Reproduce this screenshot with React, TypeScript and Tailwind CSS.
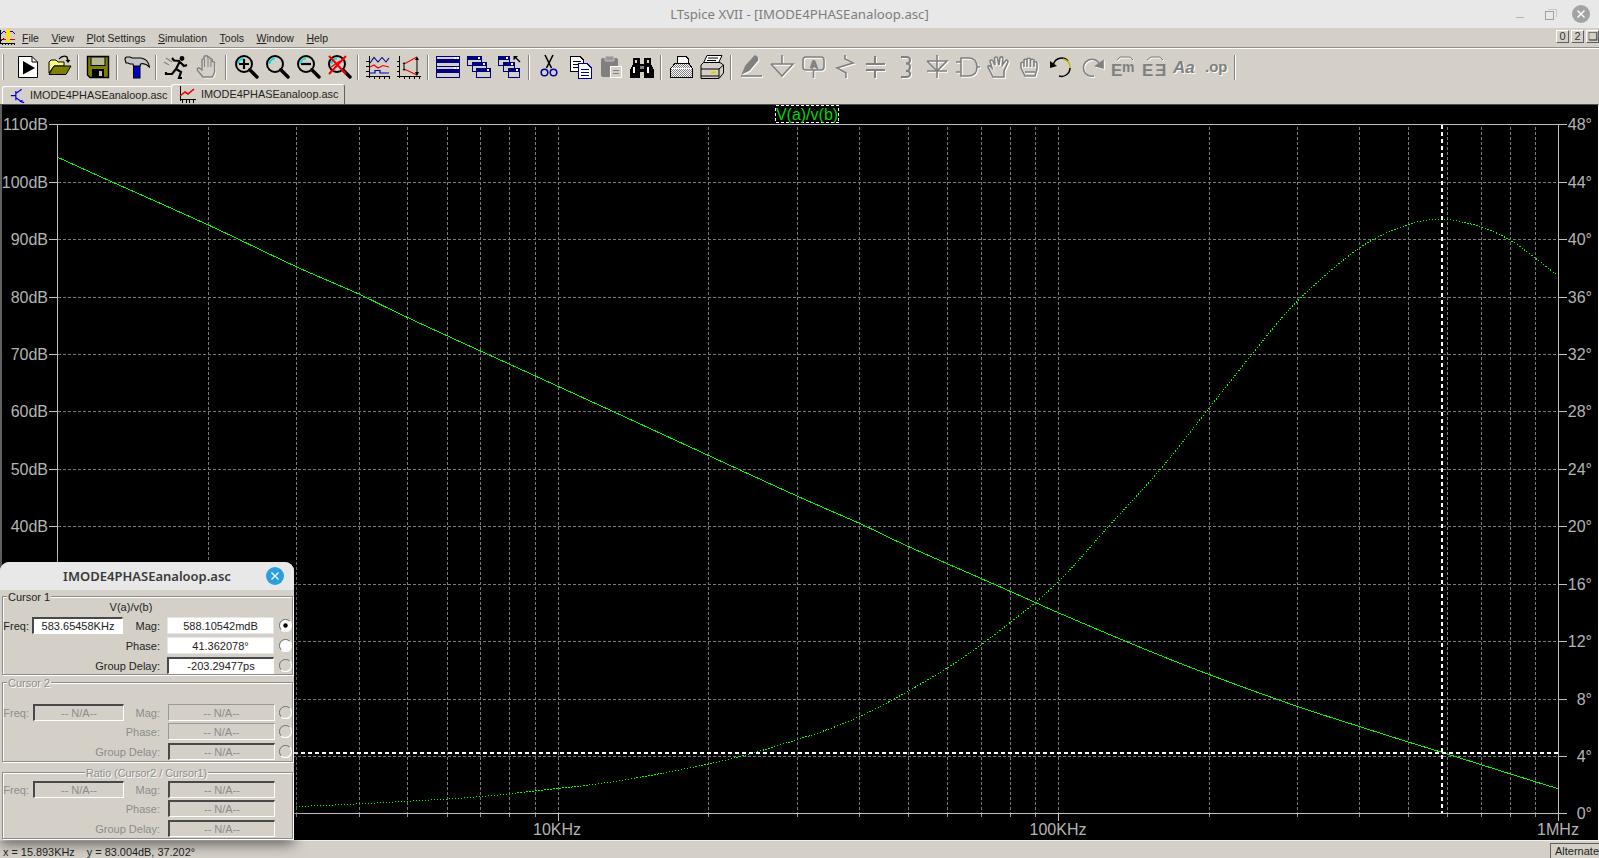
import React from "react";

const FONT = "[font-family:'Liberation_Sans',Arial,sans-serif]";

const MAG: [number, number][] = [[57.7,157.3],[110,181],[208.3,225],[296.3,266.7],[358.7,294],[420,323.3],[600,405.5],[780,488.3],[859.3,523.3],[907.3,546],[980.7,578.3],[1035,602.3],[1058.3,612.7],[1126.7,641.7],[1180,663.3],[1240,686],[1300,707.3],[1360,726.7],[1407.3,741.7],[1441.7,752.3],[1480,764.3],[1510.7,774],[1535.3,781.7],[1558.3,788.7]];
const PHASE: [number, number][] = [[296,806.7],[358.3,803.8],[407.3,801.3],[480,796.7],[535,790.9],[613.3,781.7],[708.3,764],[780,745],[859.3,716.7],[946.7,668.3],[1009.3,623.3],[1058.3,581.7],[1108.3,526.7],[1161.2,468.3],[1207.6,410],[1252.8,353.3],[1296.7,301.7],[1359,248.3],[1407.2,225],[1442.1,219.3],[1480.3,226.7],[1509.9,240],[1535.5,258.3],[1557,275]];
const pts = (a: [number, number][]) => a.map((p) => p.join(",")).join(" ");

function spline(a: [number, number][]): [number, number][] {
  const out: [number, number][] = [];
  for (let i = 0; i < a.length - 1; i++) {
    const p0 = a[Math.max(0, i - 1)], p1 = a[i], p2 = a[i + 1], p3 = a[Math.min(a.length - 1, i + 2)];
    for (let k = 0; k < 8; k++) {
      const t = k / 8, t2 = t * t, t3 = t2 * t;
      const f = (q: 0 | 1) => 0.5 * (2 * p1[q] + (p2[q] - p0[q]) * t + (2 * p0[q] - 5 * p1[q] + 4 * p2[q] - p3[q]) * t2 + (3 * p1[q] - p0[q] - 3 * p2[q] + p3[q]) * t3);
      out.push([+f(0).toFixed(2), +f(1).toFixed(2)]);
    }
  }
  out.push(a[a.length - 1]);
  return out;
}

function Plot() {
  const L = 58, R = 1558, T = 124, B = 813;
  const xs: { x: number; major: boolean }[] = [];
  for (let d = 0; d < 3; d++) for (let m = 1; m < 10; m++) {
    if (d === 0 && m === 1) continue;
    xs.push({ x: Math.round(57.7 + 500.2 * (d + Math.log10(m))), major: m === 1 });
  }
  const ys = Array.from({ length: 11 }, (_, i) => Math.round(124.3 + 57.42 * (i + 1)));
  const left = Array.from({ length: 13 }, (_, i) => `${110 - 10 * i}dB`);
  const right = Array.from({ length: 13 }, (_, i) => `${48 - 4 * i}°`);
  const tc = "#b4b4b4";
  return (
    <svg className="block w-full h-full" viewBox="2 105 1596 735" shapeRendering="crispEdges">
      <g stroke="#787878" strokeDasharray="3 2">
        {xs.map((v) => <line key={v.x} x1={v.x + 0.5} x2={v.x + 0.5} y1={T + 3} y2={B} />)}
        {ys.map((y) => <line key={y} x1={L} x2={R} y1={y + 0.5} y2={y + 0.5} />)}
      </g>
      <g stroke="#909090">
        {xs.map((v) => <line key={v.x} x1={v.x + 0.5} x2={v.x + 0.5} y1={B} y2={B + 4} />)}
      </g>
      <g stroke="#c0c0c0">
        <line x1={L - 9} x2={R + 9} y1={T + 0.5} y2={T + 0.5} />
        <line x1={L - 9} x2={R + 9} y1={B + 0.5} y2={B + 0.5} />
        <line x1={L - 0.5} x2={L - 0.5} y1={T} y2={B + 8} />
        <line x1={R + 0.5} x2={R + 0.5} y1={T} y2={B + 8} />
        {ys.map((y) => <g key={y}><line x1={L - 9} x2={L} y1={y + 0.5} y2={y + 0.5} /><line x1={R} x2={R + 9} y1={y + 0.5} y2={y + 0.5} /></g>)}
        {xs.filter((v) => v.major).map((v) => <line key={v.x} x1={v.x + 0.5} x2={v.x + 0.5} y1={B} y2={B + 8} />)}
      </g>
      <polyline points={pts(spline(PHASE))} fill="none" stroke="#00ff00" strokeDasharray="1.4 1.6" />
      <polyline points={pts(spline(MAG))} fill="none" stroke="#00f000" />
      <line x1={294} x2={R} y1={753} y2={753} stroke="#fff" strokeWidth={2} strokeDasharray="4 3" />
      <line x1={1442} x2={1442} y1={125} y2={B} stroke="#fff" strokeWidth={2} strokeDasharray="4 3" />
      <rect x={775.5} y={105.5} width={63} height={17} fill="none" stroke="#fff" strokeDasharray="3 2" />
      <g shapeRendering="auto" fontSize={16} className={FONT}>
        <text x={807} y={119.5} textAnchor="middle" fill="#00d800">V(a)/v(b)</text>
        {left.map((s, i) => <text key={s} x={48} y={124.3 + 57.42 * i + 6} textAnchor="end" fill={tc}>{s}</text>)}
        {right.map((s, i) => <text key={s} x={1592} y={124.3 + 57.42 * i + 6} textAnchor="end" fill={tc}>{s}</text>)}
        <text x={57} y={835} textAnchor="middle" fill={tc}>1KHz</text>
        <text x={557} y={835} textAnchor="middle" fill={tc}>10KHz</text>
        <text x={1058} y={835} textAnchor="middle" fill={tc}>100KHz</text>
        <text x={1558} y={835} textAnchor="middle" fill={tc}>1MHz</text>
      </g>
    </svg>
  );
}

const Svg = ({ children }: { children: React.ReactNode }) => (
  <svg width={26} height={26} viewBox="0 0 26 26" className="block shrink-0">{children}</svg>
);

const Dis = ({ children, w = 1.6 }: { children: React.ReactNode; w?: number }) => (
  <Svg>
    <g stroke="#fff" fill="none" strokeWidth={w} transform="translate(1 1)">{children}</g>
    <g stroke="#808080" fill="none" strokeWidth={w}>{children}</g>
  </Svg>
);

const handPath = "M9 23 L3.5 16.5 Q2.5 13.5 5.5 14.2 L8 16 V6.5 Q8 4.6 10 4.6 V3.2 Q10 1.8 12 1.8 Q14 1.8 14 3.2 Q16 2.6 16.2 4.6 Q18.3 4.4 18.3 6.5 V7.6 Q20.6 7.2 20.6 9.2 V18 L18.5 23 Z";

const Magnifier = ({ children }: { children?: React.ReactNode }) => (
  <Svg>
    <circle cx={11} cy={10} r={8} fill="#d4d0c8" stroke="#000" strokeWidth={2} />
    <path d="M5.5 10 A5.5 5.5 0 0 1 11 4.5" fill="none" stroke="#00e0e0" strokeWidth={2} />
    <path d="M16.8 15.8 L24 23" stroke="#000" strokeWidth={3.4} strokeLinecap="round" />
    {children}
  </Svg>
);

const MiniWin = ({ x, y, w = 13, h = 9 }: { x: number; y: number; w?: number; h?: number }) => (
  <g shapeRendering="crispEdges">
    <rect x={x + 0.5} y={y + 0.5} width={w} height={h} fill="#d4d0c8" stroke="#000080" />
    <rect x={x} y={y} width={w + 1} height={4} fill="#000080" />
    <rect x={x + w - 3} y={y + 1} width={2} height={2} fill="#fff" />
  </g>
);

const ToolIcons: Record<string, React.ReactNode> = {
  run: (
    <Svg>
      <path d="M3.5 2.5 H17 L22.5 8 V23.5 H3.5 Z" fill="#fff" stroke="#000" />
      <path d="M17 2.5 V8 H22.5" fill="none" stroke="#000" />
      <path d="M8 7 L20 14 L8 20.5 Z" fill="#000" />
    </Svg>
  ),
  open: (
    <Svg>
      <path d="M3 19 V8 L5 6 H10 L12 8 H18 V12 H8 L3 19 Z" fill="url(#dither)" stroke="#000" />
      <path d="M3 20.5 L8 12 H25 L20 20.5 Z" fill="#808000" stroke="#000" />
      <path d="M13 5 Q17 0.5 21 3 L22 7" fill="none" stroke="#000" strokeWidth={1.4} />
      <path d="M19.5 6 H24.5 L22 9 Z" fill="#000" />
    </Svg>
  ),
  save: (
    <Svg>
      <path d="M2.5 2.5 H23.5 V23.5 H5 L2.5 21 Z" fill="#808000" stroke="#000" strokeWidth={1.4} />
      <rect x={6} y={3} width={14} height={8.5} fill="#b8b890" stroke="#000" />
      <rect x={7} y={15} width={12} height={8} fill="#000" />
      <rect x={14} y={17} width={3} height={5} fill="#c0c0c0" />
    </Svg>
  ),
  hammer: (
    <Svg>
      <rect x={9.5} y={11} width={6.5} height={13} fill="#0000c8" stroke="#000" />
      <path d="M1 5.5 Q1 3 3 3 H6 L8 4 H17 Q24 5 25.5 13 Q21 8.5 16.5 10 L16 12 H9.5 L9 10 H6 L4 9 H2 Z" fill="#c4c4c4" stroke="#000" strokeWidth={1.1} />
    </Svg>
  ),
  runner: (
    <Svg>
      <path d="M3 4 L9 8 M1 8 L6 11" stroke="#808080" strokeWidth={1.2} fill="none" />
      <circle cx={19} cy={4.5} r={2.4} fill="#000" />
      <path d="M17 7 L13 15 M17 7 L11 6.5 L9 4 M17 8 L21 12 L24 11 M13 15 L18 18 L16 24 L19 24 M13 15 L9 20 H3 V18" stroke="#000" strokeWidth={2.2} fill="none" />
    </Svg>
  ),
  hand: (
    <Svg>
      <path d={handPath} fill="#fff" transform="translate(1 1)" stroke="#fff" />
      <path d={handPath} fill="#d4d0c8" stroke="#808080" strokeWidth={1.4} />
      <path d="M10.5 5 V13 M14 3.5 V13 M17 5 V13" stroke="#808080" fill="none" />
    </Svg>
  ),
  zoomIn: <Magnifier><path d="M6 10 H16 M11 5 V15" stroke="#000" strokeWidth={2.2} /></Magnifier>,
  zoom: <Magnifier />,
  zoomOut: <Magnifier><path d="M6 10 H16" stroke="#000" strokeWidth={2.2} /></Magnifier>,
  zoomX: (
    <Magnifier>
      <path d="M3 2 L20 20 M20 2 L3 20" stroke="#f00000" strokeWidth={2} />
      <path d="M5 13 L14 7" stroke="#f00000" strokeWidth={1.4} />
    </Magnifier>
  ),
  wave: (
    <Svg>
      <g shapeRendering="crispEdges" stroke="#000">
        <path d="M4.5 2 V24 M1 22.5 H25 M1 17.5 H4 M1 12.5 H4 M1 7.5 H4 M9.5 22 V25 M14.5 22 V25 M19.5 22 V25 M24.5 22 V25" fill="none" />
      </g>
      <path d="M5 9 L9 3.5 L13 8 L17 3.5 L21 8 L24 4" fill="none" stroke="#000080" strokeWidth={1.1} />
      <path d="M5 13 L9 11 L13 14 L18 11.5 L24 13" fill="none" stroke="#f00000" strokeWidth={1.1} />
      <path d="M5 19 H10 V16.5 H15 V19 H24" fill="none" stroke="#0000c0" strokeWidth={1.2} />
    </Svg>
  ),
  auto: (
    <Svg>
      <path d="M3.5 2 V24 M1 22.5 H25 M1 17.5 H3 M1 12.5 H3 M1 7.5 H3 M8.5 22 V25 M13.5 22 V25 M18.5 22 V25 M23.5 22 V25" fill="none" stroke="#000" shapeRendering="crispEdges" />
      <path d="M8 10 L21 3 M8 15 L21 21" stroke="#f00000" fill="none" strokeWidth={1.1} />
      <path d="M21 4 V20 M8 10 V15" stroke="#000" fill="none" />
      <path d="M19 6 L21 2.5 L23 6 Z M19 18 L21 22 L23 18 Z M6.5 10 L8 8 L9.5 10 Z M6.5 15 L8 17 L9.5 15 Z" fill="#000" />
    </Svg>
  ),
  tile: (
    <Svg>
      <g shapeRendering="crispEdges">
        <rect x={1.5} y={2.5} width={23} height={10} fill="#d4d0c8" stroke="#000080" />
        <rect x={1} y={5} width={24} height={4} fill="#000080" />
        <rect x={1.5} y={12.5} width={23} height={11} fill="#d4d0c8" stroke="#000080" />
        <rect x={1} y={15} width={24} height={4} fill="#000080" />
        <rect x={19} y={3} width={2} height={2} fill="#fff" /><rect x={22} y={3} width={2} height={2} fill="#fff" />
        <rect x={19} y={13} width={2} height={2} fill="#fff" /><rect x={22} y={13} width={2} height={2} fill="#fff" />
      </g>
    </Svg>
  ),
  cascade: (
    <Svg>
      <MiniWin x={1} y={2} w={14} /><MiniWin x={6} y={8} w={14} /><MiniWin x={10} y={14} w={14} />
    </Svg>
  ),
  arrange: (
    <Svg>
      <MiniWin x={1} y={2} w={11} /><MiniWin x={6} y={8} w={11} /><MiniWin x={11} y={14} w={11} />
      <path d="M18 3 L23 8" stroke="#000" strokeWidth={1.4} />
      <path d="M16.5 6.5 V2 H21 Z" fill="#000" />
    </Svg>
  ),
  cut: (
    <Svg>
      <path d="M9 1 L15.5 14 M17 1 L10.5 14" stroke="#000" strokeWidth={1.6} />
      <circle cx={8.5} cy={18.5} r={3.3} fill="none" stroke="#0000a0" strokeWidth={1.5} />
      <circle cx={17.5} cy={18.5} r={3.3} fill="none" stroke="#0000a0" strokeWidth={1.5} />
    </Svg>
  ),
  copy: (
    <Svg>
      <g shapeRendering="crispEdges">
        <path d="M3.5 2.5 H13 L16.5 6 V17.5 H3.5 Z" fill="#fff" stroke="#000" />
        <path d="M6 7.5 H14 M6 10.5 H14 M6 13.5 H12" stroke="#000" />
        <path d="M11.5 9.5 H20 L24.5 13.5 V24.5 H11.5 Z" fill="#fff" stroke="#000080" strokeWidth={1.4} />
        <path d="M14 15.5 H22 M14 18.5 H22 M14 21.5 H22" stroke="#000080" />
      </g>
    </Svg>
  ),
  paste: (
    <Svg>
      <rect x={3} y={4} width={17} height={19} rx={2} fill="#808080" />
      <rect x={7} y={2} width={9} height={5} rx={1} fill="#999" stroke="#d4d0c8" strokeWidth={0.8} />
      <g shapeRendering="crispEdges">
        <rect x={12.5} y={12.5} width={11} height={11} fill="#d4d0c8" stroke="#fff" />
        <path d="M15 16.5 H21 M15 19.5 H21" stroke="#808080" />
      </g>
    </Svg>
  ),
  binoc: (
    <Svg>
      <g shapeRendering="crispEdges">
        <path d="M4 4 H11 V10 H15 V4 H22 V10 L25 16 V24 H15 V18 H11 V24 H1 V16 L4 10 Z" fill="#000" />
        <rect x={6} y={6} width={2} height={3} fill="#d4d0c8" /><rect x={18} y={6} width={2} height={3} fill="#d4d0c8" />
        <rect x={4} y={13} width={2} height={6} fill="#fff" /><rect x={18} y={13} width={2} height={6} fill="#fff" />
        <rect x={11} y={12} width={4} height={3} fill="#808080" />
      </g>
    </Svg>
  ),
  preview: (
    <Svg>
      <g shapeRendering="crispEdges">
        <path d="M9.5 2.5 H18 L20.5 5 V11 H9.5 Z" fill="#fff" stroke="#000" />
        <path d="M2.5 14.5 L7 9.5 H21 L24.5 14.5 V23.5 H2.5 Z" fill="url(#gray)" stroke="#000" />
        <path d="M3 14.5 H24" stroke="#fff" />
      </g>
    </Svg>
  ),
  print: (
    <Svg>
      <path d="M8 1.5 H23 L19 10 H4 Z" fill="#fff" stroke="#000" />
      <path d="M9 4 H19 M8 6.5 H17" stroke="#000" />
      <path d="M2 11 L4.5 8.5 H21 L24.5 11 V19 L20 24.5 H2 Z" fill="#d4d0c8" stroke="#000" />
      <path d="M2 15 H20 V24 M20 15 L24.5 11" stroke="#000" fill="none" />
      <rect x={12} y={17.5} width={5} height={2} fill="#e0d000" />
      <path d="M2 22 H20" stroke="#000" />
    </Svg>
  ),
  pencil: (
    <Dis>
      <path d="M5 19 L8 12 L17 2 Q20 3 19.5 6 L11 16 Z" fill="#808080" />
      <path d="M3 22 H24" />
    </Dis>
  ),
  ground: <Dis><path d="M13 1 V10 M2 10 H24 L13 22 L2 10" /></Dis>,
  label: (
    <Dis>
      <rect x={3} y={3} width={21} height={13} rx={3} />
      <path d="M13.5 16 V24" />
      <text x={13.5} y={13.5} textAnchor="middle" fontSize={11} fontWeight={700} stroke="none" fill="#808080" className={FONT}>A</text>
    </Dis>
  ),
  res: <Dis><path d="M14 1 V5 L22 9 L6 14 L15 19 V24" /></Dis>,
  cap: <Dis w={2}><path d="M13 2 V10 M4 10 H23 M4 16 H23 M13 16 V24" /></Dis>,
  ind: <Dis w={2}><path d="M8 3 H13 Q17 3 17 6 Q17 9.5 13 9.5 Q17 9.5 17 13 Q17 17 13 17 Q17 17 17 20 Q17 23 13 23 H8" /></Dis>,
  diode: <Dis><path d="M13 1 V24 M3 7 H23 L13 17 L3 7 M3 17 H23" /></Dis>,
  gate: <Dis><path d="M1 8 H6 M1 18 H6 M6 4 H13 Q22 4 22 13 Q22 22 13 22 H6 Z M22 13 H25" /></Dis>,
  handBig: (
    <Dis>
      <path d="M7 23 L2 13 Q2 11 4 12 L6 14 L4 7 Q5 5 7 7 L9 11 L8.5 4 Q10 2 11.5 4 L13 11 L14 3.5 Q16 2 17 4 L16.5 11 L20 6 Q22 6 22 8 L18 17 L18 23 Z" />
    </Dis>
  ),
  handSmall: (
    <Dis>
      <path d="M8 22 L4 14 V9 Q5 7.5 7 9 V6 Q8 4.5 10 6 V5 Q11.5 3.5 13.5 5 V6 Q15 4.5 17 6 V8 Q19 7 20 9 V15 L18 22 Z M7 9 V13 M10 6 V13 M13.5 6 V13 M17 8 V13 M8 18 H18" />
    </Dis>
  ),
  undo: (
    <Svg>
      <path d="M5.5 10 A8.5 8.5 0 0 1 20 7" fill="none" stroke="#000" strokeWidth={1.5} />
      <path d="M15 5 A8.5 8.5 0 0 1 22 15" fill="none" stroke="#c8b400" strokeWidth={1.5} />
      <path d="M22 14 A8.5 8.5 0 0 1 11 22" fill="none" stroke="#000" strokeWidth={1.5} />
      <path d="M2 7 L9 12 L2 14 Z" fill="#000" />
    </Svg>
  ),
  redo: (
    <Dis>
      <path d="M20.5 10 A8.5 8.5 0 1 0 15 22" />
      <path d="M24 7 L17 12 L24 14 Z" fill="#808080" />
    </Dis>
  ),
  em: (
    <Svg>
      <path d="M7 6 L10 3 H20 L23 6" fill="none" stroke="#fff" transform="translate(1 1)" />
      <path d="M7 6 L10 3 H20 L23 6" fill="none" stroke="#808080" />
      <text x={1} y={22} fontSize={17} fontWeight={700} fill="#808080" className={FONT}>E</text>
      <text x={12} y={18} fontSize={14} fontWeight={700} fill="#808080" className={FONT}>m</text>
    </Svg>
  ),
  e3: (
    <Svg>
      <path d="M6 6 L10 3 H19 L22 6" fill="none" stroke="#fff" transform="translate(1 1)" />
      <path d="M6 6 L10 3 H19 L22 6" fill="none" stroke="#808080" />
      <text x={1} y={22} fontSize={17} fontWeight={700} fill="#808080" className={FONT}>E</text>
      <text x={14} y={22} fontSize={17} fontWeight={700} fill="#808080" className={FONT}>Ǝ</text>
    </Svg>
  ),
  aa: (
    <Svg>
      <text x={2} y={20} fontSize={17} fontWeight={700} fontStyle="italic" fill="#fff" className={FONT}>Aa</text>
      <text x={1} y={19} fontSize={17} fontWeight={700} fontStyle="italic" fill="#808080" className={FONT}>Aa</text>
    </Svg>
  ),
  op: (
    <Svg>
      <text x={3} y={19} fontSize={15} fontWeight={700} fill="#fff" className={FONT}>.op</text>
      <text x={2} y={18} fontSize={15} fontWeight={700} fill="#808080" className={FONT}>.op</text>
    </Svg>
  ),
};

const LAYOUT = ["run","open","|","save","|","hammer","|","runner","hand","|","zoomIn","zoom","zoomOut","zoomX","|","wave","auto","|","tile","cascade","arrange","|","cut","copy","paste","binoc","|","preview","print","|","pencil","ground","label","res","cap","ind","diode","gate","handBig","handSmall","undo","redo","em","e3","aa","op","|"];

function Toolbar() {
  return (
    <div className="flex items-center h-[36px] pl-[2px] shrink-0">
      <div className="w-[2px] h-[26px] bg-[#909090] border-l border-white mr-[8px]" />
      {LAYOUT.map((k, i) =>
        k === "|" ? (
          <div key={i} className="w-[8px] flex justify-center">
            <div className="w-[2px] h-[25px] bg-white border-l border-[#808080]" />
          </div>
        ) : (
          <div key={i} className="w-[31px] flex justify-center">{ToolIcons[k]}</div>
        )
      )}
    </div>
  );
}

const MENUS: [string, string][] = [["F","ile"],["V","iew"],["P","lot Settings"],["S","imulation"],["T","ools"],["W","indow"],["H","elp"]];

const AppLogo = () => (
  <svg width={16} height={16} viewBox="0 0 16 16" className="block shrink-0" shapeRendering="crispEdges">
    <path d="M0 1 V15 M0 14 H15" stroke="#000" fill="none" />
    <path d="M1 5 L4 2 L7 5 L9 2 L12 2 L15 5" stroke="#0000c0" fill="none" />
    <path d="M1 10 H15" stroke="#e00000" fill="none" />
    <path d="M1 12 L4 9" stroke="#000" fill="none" />
    <rect x={6} y={0} width={4} height={9} fill="#ffe000" />
    <rect x={6} y={10} width={4} height={3} fill="#ffe000" />
    <path d="M2 15 V16 M5 15 V16 M8 15 V16 M11 15 V16 M14 15 V16" stroke="#000" />
  </svg>
);

const TabIconSch = () => (
  <svg width={15} height={16} viewBox="0 0 18 18" className="block shrink-0">
    <path d="M1 8.5 H7 M7 3 V14 M7 6 L14 1 M7 11 L14 16 L17 17" stroke="#0000e0" strokeWidth={1.4} fill="none" />
    <path d="M11 15.5 L15 13.5 L15 17 Z" fill="#0000e0" />
  </svg>
);

const TabIconPlot = () => (
  <svg width={17} height={17} viewBox="0 0 17 17" className="block shrink-0">
    <path d="M1 0 V15 M1 13.5 H17 M3.5 14 V17 M7 14 V17 M10.5 14 V17 M14 14 V17" stroke="#000" fill="none" shapeRendering="crispEdges" />
    <path d="M1 10 L6 6 L9 8 L15 3" stroke="#e00000" strokeWidth={1.6} fill="none" />
  </svg>
);

const Tab = ({ active, icon }: { active?: boolean; icon: React.ReactNode }) => (
  <div className={active
    ? "relative z-10 -ml-[1px] w-[174px] h-[20px] flex items-center pl-[7px] gap-[5px] bg-[#d4d0c8] border-t border-l border-t-white border-l-white border-r border-r-[#606060] rounded-tl-[3px] rounded-tr-[3px]"
    : "w-[170px] h-[18px] flex items-center pl-[7px] gap-[5px] bg-[#d4d0c8] border-t border-l border-t-white border-l-white rounded-tl-[3px]"}>
    {icon}
    <span className="text-[10.9px] leading-none text-[#222] whitespace-nowrap">IMODE4PHASEanaloop.asc</span>
  </div>
);

type Border = "dark" | "light" | "none";

const Field = ({ v, b, w, dis }: { v: string; b: Border; w: string; dis?: boolean }) => (
  <div className={`${w} h-full flex items-center justify-center pt-[1px] text-[11px] leading-none ${dis ? "text-[#8c8c8c]" : "bg-white text-[#222]"} ${
    b === "dark"
      ? "border-t-2 border-l-2 border-t-[#484848] border-l-[#484848] border-r border-b border-r-white border-b-white"
      : b === "light"
      ? "border border-t-[#989898] border-l-[#989898] border-r-white border-b-white"
      : "border border-[#e6e6e6]"
  }`}>{v}</div>
);

const Radio = ({ state }: { state: "on" | "white" | "off" | "none" }) => (
  <div className="w-[13px] h-[13px] ml-[5px] shrink-0">
    {state !== "none" && (
      <svg width={13} height={13} viewBox="0 0 13 13" className="block">
        {state !== "off" && <circle cx={6.5} cy={6.5} r={5.5} fill="#fff" />}
        <path d="M2.2 10.8 A6 6 0 0 1 10.8 2.2" fill="none" stroke="#707070" strokeWidth={1} />
        <path d="M10.8 2.2 A6 6 0 0 1 2.2 10.8" fill="none" stroke="#fff" strokeWidth={1.2} />
        {state === "on" && <circle cx={6.5} cy={6.5} r={2.2} fill="#000" />}
      </svg>
    )}
  </div>
);

const Row = ({ label, v, b, radio, dis, freq, shift, mt }: { label: string; v: string; b: Border; radio: "on" | "white" | "off" | "none"; dis?: boolean; freq?: { v: string; b: Border }; shift?: boolean; mt: string }) => (
  <div className={`flex items-stretch h-[17px] ${mt}`}>
    {freq && (
      <div className="flex items-stretch">
        <span className={`w-[26px] text-right text-[11px] leading-[18px] ${dis ? "text-[#8c8c8c]" : "text-[#222]"}`}>Freq:</span>
        <div className={`${shift ? "ml-[4px]" : "ml-[3px]"} h-full`}><Field v={freq.v} b={freq.b} w="w-[91px]" dis={dis} /></div>
      </div>
    )}
    <span className={`flex-1 text-right text-[11px] leading-[18px] whitespace-nowrap ${dis ? "text-[#8c8c8c]" : "text-[#222]"}`}>{label}</span>
    <div className={`${shift ? "ml-[8px]" : "ml-[7px]"} h-full`}><Field v={v} b={b} w="w-[107px]" dis={dis} /></div>
    <div className={`self-center ${shift ? "-ml-[1px]" : ""}`}><Radio state={radio} /></div>
  </div>
);

const Legend = ({ children, dis, center }: { children: React.ReactNode; dis?: boolean; center?: boolean }) => (
  <span className={`absolute -top-[6px] ${center ? "left-[82px] text-[10.8px]" : "left-[4px] text-[11px]"} bg-[#d4d0c8] px-[1px] leading-[13px] whitespace-nowrap ${dis ? "text-[#8c8c8c] [text-shadow:1px_1px_0_#fff]" : "text-[#222]"}`}>{children}</span>
);

const Section = ({ h, mt, children }: { h: string; mt: string; children: React.ReactNode }) => (
  <div className={`relative ${h} ${mt} border border-[#8c8c8c] shadow-[1px_1px_0_#fff,inset_1px_1px_0_#fff]`}>{children}</div>
);

function Dialog() {
  const na = "-- N/A--";
  return (
    <div className="absolute left-0 top-[562px] w-[294px] h-[278px] flex flex-col bg-[#d4d0c8] rounded-t-[9px] shadow-[0_4px_14px_rgba(0,0,0,0.55)] z-20">
      <div className="relative h-[28px] shrink-0 flex items-center justify-center bg-[#e8e8e8] rounded-t-[9px]">
        <span className="[font-family:'Noto_Sans',sans-serif] font-semibold text-[13px] text-[#3a3a3a] pt-[1px]">IMODE4PHASEanaloop.asc</span>
        <div className="absolute right-[10px] top-[5px] w-[18px] h-[18px] rounded-full bg-[#2a9fe0] flex items-center justify-center">
          <svg width={10} height={10} viewBox="0 0 10 10"><path d="M1.5 1.5 L8.5 8.5 M8.5 1.5 L1.5 8.5" stroke="#fff" strokeWidth={1.3} /></svg>
        </div>
      </div>
      <div className="flex flex-col pl-[2px] pr-[1px]">
        <Section h="h-[79px]" mt="mt-[6px]">
          <Legend>Cursor 1</Legend>
          <div className="h-[12px] mt-[4px] text-center text-[11px] leading-[12px] text-[#222] pr-[33px]">V(a)/v(b)</div>
          <Row mt="mt-[4px]" label="Mag:" v="588.10542mdB" b="none" radio="on" freq={{ v: "583.65458KHz", b: "dark" }} />
          <Row mt="mt-[3px]" label="Phase:" v="41.362078°" b="none" radio="white" />
          <Row mt="mt-[3px]" label="Group Delay:" v="-203.29477ps" b="dark" radio="off" />
        </Section>
        <Section h="h-[80px]" mt="mt-[7px]">
          <Legend dis>Cursor 2</Legend>
          <div className="h-[21px]" />
          <Row dis shift mt="" label="Mag:" v={na} b="light" radio="off" freq={{ v: na, b: "dark" }} />
          <Row dis shift mt="mt-[2.4px]" label="Phase:" v={na} b="light" radio="off" />
          <Row dis shift mt="mt-[2.4px]" label="Group Delay:" v={na} b="dark" radio="off" />
        </Section>
        <Section h="h-[67px]" mt="mt-[10px]">
          <Legend dis center>Ratio (Cursor2 / Cursor1)</Legend>
          <div className="h-[8px]" />
          <Row dis shift mt="" label="Mag:" v={na} b="dark" radio="none" freq={{ v: na, b: "dark" }} />
          <Row dis shift mt="mt-[2.4px]" label="Phase:" v={na} b="dark" radio="none" />
          <Row dis shift mt="mt-[2.4px]" label="Group Delay:" v={na} b="dark" radio="none" />
        </Section>
      </div>
    </div>
  );
}

export default function App() {
  return (
    <div className={`relative w-[1599px] h-[858px] overflow-hidden flex flex-col bg-[#d4d0c8] text-[#222] ${FONT}`}>
      <div className="relative h-[28px] shrink-0 flex items-center justify-center bg-[#e8e8e8]">
        <span className="[font-family:'Noto_Sans',sans-serif] text-[13.2px] pt-[1px] text-[#7d7d7d]">LTspice XVII - [IMODE4PHASEanaloop.asc]</span>
        <div className="absolute right-[9px] top-0 h-[28px] flex items-center gap-[17px]">
          <svg width={13} height={13} viewBox="0 0 13 13"><path d="M1 9.5 H9" stroke="#b0b0b0" strokeWidth={1} /></svg>
          <svg width={13} height={13} viewBox="0 0 13 13" shapeRendering="crispEdges"><rect x={0.5} y={3.5} width={8} height={8} fill="none" stroke="#a0a0a0" /><path d="M3 1.5 H11.5 V9" fill="none" stroke="#c8c8c8" /></svg>
          <div className="-ml-[3px] w-[18px] h-[18px] rounded-full bg-[#a3a3a3] flex items-center justify-center">
            <svg width={10} height={10} viewBox="0 0 10 10"><path d="M1.5 1.5 L8.5 8.5 M8.5 1.5 L1.5 8.5" stroke="#fff" strokeWidth={1.4} /></svg>
          </div>
        </div>
      </div>

      <div className="relative h-[19px] shrink-0 flex items-center">
        <div className="-mt-[1px]"><AppLogo /></div>
        <div className="flex items-center gap-[12.5px] ml-[6px] pt-[2px] text-[10.5px] leading-none text-[#222]">
          {MENUS.map(([a, b]) => (
            <span key={a} className="whitespace-nowrap"><span className="underline">{a}</span>{b}</span>
          ))}
        </div>
        <div className="absolute right-0 top-[2px] flex gap-[2px]">
          {["0", "2", "❑"].map((g) => (
            <div key={g} className="w-[13px] h-[13px] flex items-center justify-center text-[11px] leading-none text-[#333] bg-[#d4d0c8] border border-t-white border-l-white border-r-[#606060] border-b-[#606060]">{g}</div>
          ))}
        </div>
      </div>

      <div className="h-[2px] shrink-0 bg-white border-t border-[#909090]" />
      <Toolbar />

      <div className="h-[19px] shrink-0 flex items-end pl-[2px]">
        <Tab icon={<TabIconSch />} />
        <Tab active icon={<TabIconPlot />} />
      </div>

      <div className="flex-1 min-h-0 bg-black border-l-2 border-l-[#606060] border-t border-t-[#505050] border-r border-r-white">
        <Plot />
      </div>

      <div className="h-[18px] shrink-0 flex items-stretch justify-between border-t border-[#f0f0f0]">
        <span className="pl-[3px] text-[10.9px] leading-[22px] whitespace-pre text-[#222]">x = 15.893KHz    y = 83.004dB, 37.202°</span>
        <div className="mt-[2px] w-[49px] pl-[4px] text-[11px] leading-[14px] border-t border-l border-t-[#606060] border-l-[#606060]">Alternate</div>
      </div>

      <svg width={0} height={0} className="absolute">
        <defs>
          <pattern id="dither" width={2} height={2} patternUnits="userSpaceOnUse">
            <rect width={2} height={2} fill="#ffff00" />
            <rect width={1} height={1} fill="#fff" /><rect x={1} y={1} width={1} height={1} fill="#fff" />
          </pattern>
          <pattern id="gray" width={2} height={2} patternUnits="userSpaceOnUse">
            <rect width={2} height={2} fill="#fff" />
            <rect width={1} height={1} fill="#808080" /><rect x={1} y={1} width={1} height={1} fill="#808080" />
          </pattern>
        </defs>
      </svg>

      <Dialog />
    </div>
  );
}
